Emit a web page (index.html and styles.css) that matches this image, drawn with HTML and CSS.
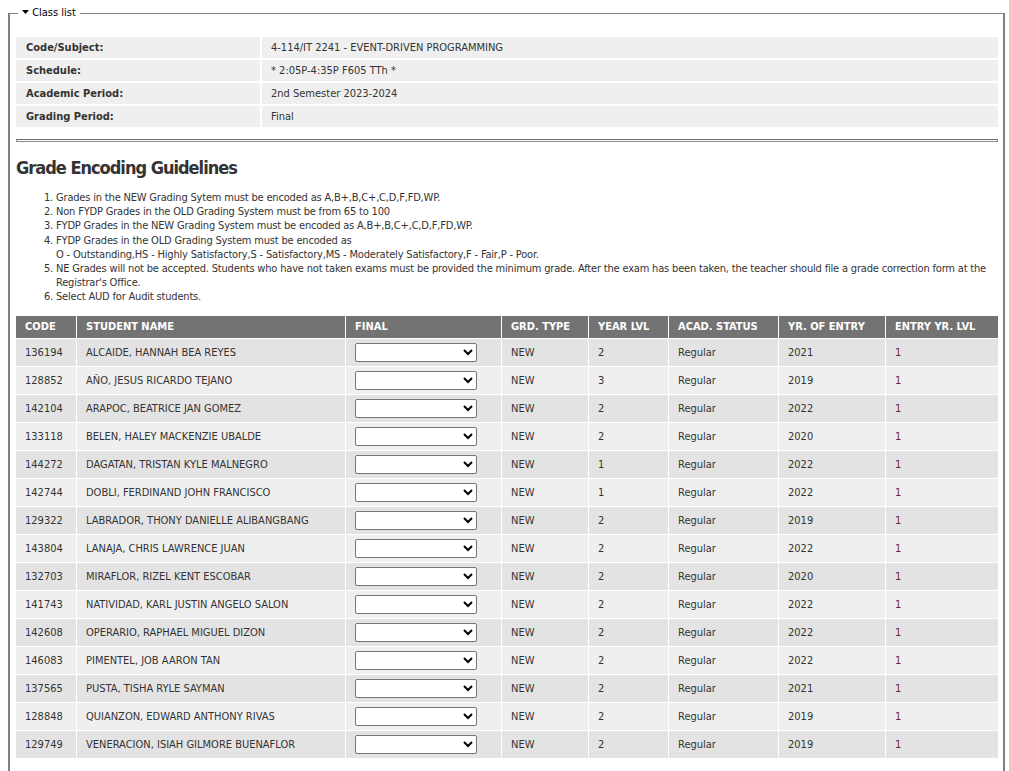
FILE: index.html
```html
<!DOCTYPE html>
<html>
<head>
<meta charset="utf-8">
<link rel="stylesheet" href="styles.css">
</head>
<body>
<fieldset class="box">
  <legend class="box-legend"><svg class="caret" width="7" height="4" viewBox="0 0 7 4"><path d="M0 0H7L3.5 4Z" fill="#000"/></svg> Class list</legend>

  <table class="info">
    <tr><th>Code/Subject:</th><td>4-114/IT 2241 - EVENT-DRIVEN PROGRAMMING</td></tr>
    <tr><th>Schedule:</th><td>* 2:05P-4:35P F605 TTh *</td></tr>
    <tr><th>Academic Period:</th><td>2nd Semester 2023-2024</td></tr>
    <tr><th>Grading Period:</th><td>Final</td></tr>
  </table>

  <div class="divider"></div>

  <h2 class="title">Grade Encoding Guidelines</h2>
  <ol class="rules">
    <li>Grades in the NEW Grading Sytem must be encoded as A,B+,B,C+,C,D,F,FD,WP.</li>
    <li>Non FYDP Grades in the OLD Grading System must be from 65 to 100</li>
    <li>FYDP Grades in the NEW Grading System must be encoded as A,B+,B,C+,C,D,F,FD,WP.</li>
    <li>FYDP Grades in the OLD Grading System must be encoded as<br>O - Outstanding,HS - Highly Satisfactory,S - Satisfactory,MS - Moderately Satisfactory,F - Fair,P - Poor.</li>
    <li>NE Grades will not be accepted. Students who have not taken exams must be provided the minimum grade. After the exam has been taken, the teacher should file a grade correction form at the Registrar's Office.</li>
    <li>Select AUD for Audit students.</li>
  </ol>

  <table class="grades">
    <colgroup>
      <col class="c-code"><col class="c-name"><col class="c-final"><col class="c-type"><col class="c-year"><col class="c-status"><col class="c-entry"><col class="c-lvl">
    </colgroup>
    <thead>
      <tr><th>CODE</th><th>STUDENT NAME</th><th>FINAL</th><th>GRD. TYPE</th><th>YEAR LVL</th><th>ACAD. STATUS</th><th>YR. OF ENTRY</th><th>ENTRY YR. LVL</th></tr>
    </thead>
    <tbody>
      <tr><td>136194</td><td>ALCAIDE, HANNAH BEA REYES</td><td><select class="grade"><option></option></select></td><td>NEW</td><td>2</td><td>Regular</td><td>2021</td><td class="lvl">1</td></tr>
      <tr><td>128852</td><td>AÑO, JESUS RICARDO TEJANO</td><td><select class="grade"><option></option></select></td><td>NEW</td><td>3</td><td>Regular</td><td>2019</td><td class="lvl">1</td></tr>
      <tr><td>142104</td><td>ARAPOC, BEATRICE JAN GOMEZ</td><td><select class="grade"><option></option></select></td><td>NEW</td><td>2</td><td>Regular</td><td>2022</td><td class="lvl">1</td></tr>
      <tr><td>133118</td><td>BELEN, HALEY MACKENZIE UBALDE</td><td><select class="grade"><option></option></select></td><td>NEW</td><td>2</td><td>Regular</td><td>2020</td><td class="lvl">1</td></tr>
      <tr><td>144272</td><td>DAGATAN, TRISTAN KYLE MALNEGRO</td><td><select class="grade"><option></option></select></td><td>NEW</td><td>1</td><td>Regular</td><td>2022</td><td class="lvl">1</td></tr>
      <tr><td>142744</td><td>DOBLI, FERDINAND JOHN FRANCISCO</td><td><select class="grade"><option></option></select></td><td>NEW</td><td>1</td><td>Regular</td><td>2022</td><td class="lvl">1</td></tr>
      <tr><td>129322</td><td>LABRADOR, THONY DANIELLE ALIBANGBANG</td><td><select class="grade"><option></option></select></td><td>NEW</td><td>2</td><td>Regular</td><td>2019</td><td class="lvl">1</td></tr>
      <tr><td>143804</td><td>LANAJA, CHRIS LAWRENCE JUAN</td><td><select class="grade"><option></option></select></td><td>NEW</td><td>2</td><td>Regular</td><td>2022</td><td class="lvl">1</td></tr>
      <tr><td>132703</td><td>MIRAFLOR, RIZEL KENT ESCOBAR</td><td><select class="grade"><option></option></select></td><td>NEW</td><td>2</td><td>Regular</td><td>2020</td><td class="lvl">1</td></tr>
      <tr><td>141743</td><td>NATIVIDAD, KARL JUSTIN ANGELO SALON</td><td><select class="grade"><option></option></select></td><td>NEW</td><td>2</td><td>Regular</td><td>2022</td><td class="lvl">1</td></tr>
      <tr><td>142608</td><td>OPERARIO, RAPHAEL MIGUEL DIZON</td><td><select class="grade"><option></option></select></td><td>NEW</td><td>2</td><td>Regular</td><td>2022</td><td class="lvl">1</td></tr>
      <tr><td>146083</td><td>PIMENTEL, JOB AARON TAN</td><td><select class="grade"><option></option></select></td><td>NEW</td><td>2</td><td>Regular</td><td>2022</td><td class="lvl">1</td></tr>
      <tr><td>137565</td><td>PUSTA, TISHA RYLE SAYMAN</td><td><select class="grade"><option></option></select></td><td>NEW</td><td>2</td><td>Regular</td><td>2021</td><td class="lvl">1</td></tr>
      <tr><td>128848</td><td>QUIANZON, EDWARD ANTHONY RIVAS</td><td><select class="grade"><option></option></select></td><td>NEW</td><td>2</td><td>Regular</td><td>2019</td><td class="lvl">1</td></tr>
      <tr><td>129749</td><td>VENERACION, ISIAH GILMORE BUENAFLOR</td><td><select class="grade"><option></option></select></td><td>NEW</td><td>2</td><td>Regular</td><td>2019</td><td class="lvl">1</td></tr>
    </tbody>
  </table>
</fieldset>
</body>
</html>
```

FILE: styles.css
```css
html, body {
  margin: 0;
  padding: 0;
  background: #fff;
}

body {
  font-family: "DejaVu Sans Condensed", "DejaVu Sans", "Liberation Sans", sans-serif;
  font-size: 11px;
  color: #333;
}

.box {
  margin: 6px 4px 0 8px;
  padding: 15px 3px 40px 4px;
  border: 2px solid #808080;
  border-top-width: 1px;
  min-width: 0;
}

.box-legend {
  margin-left: 4px;
  padding: 0 4px;
  line-height: 14px;
  color: #000;
  font-size: 11px;
}

.caret {
  vertical-align: 2px;
  margin-right: 0;
}

.info {
  width: 100%;
  border-collapse: separate;
  border-spacing: 2px;
}

.info th,
.info td {
  background: #efefef;
  height: 21px;
  padding: 0 10px;
  text-align: left;
  vertical-align: middle;
}

.info th {
  width: 224px;
  font-weight: bold;
}

.info td {
  padding-left: 9px;
}

.divider {
  margin: 10px 2px 0 2px;
  height: 1px;
  border: 1px solid #8c8c8c;
  border-top-color: #6c6c6c;
}

.title {
  margin: 15px 0 12px 2px;
  font-size: 18px;
  line-height: 22px;
  font-weight: bold;
  letter-spacing: -1px;
  color: #333;
}

.rules {
  margin: 0;
  padding-left: 42px;
  line-height: 14.2px;
  letter-spacing: -0.18px;
  color: #333;
}

.grades {
  margin: 10px 1px 0 1px;
  width: calc(100% - 2px);
  table-layout: fixed;
  border-collapse: separate;
  border-spacing: 1px;
}

.c-code { width: 60px; }
.c-name { width: 268px; }
.c-final { width: 155px; }
.c-type { width: 86px; }
.c-year { width: 79px; }
.c-status { width: 109px; }
.c-entry { width: 106px; }
.c-lvl { width: 112px; }

.grades th {
  background: #737373;
  color: #fff;
  font-weight: bold;
  text-align: left;
  height: 22px;
  padding: 0 9px;
  white-space: nowrap;
}

.grades td {
  height: 27px;
  padding: 0 9px;
  vertical-align: middle;
  white-space: nowrap;
}

.grades tbody tr:nth-child(odd) td {
  background: #e3e3e3;
}

.grades tbody tr:nth-child(even) td {
  background: #efefef;
}

.grades td.lvl {
  color: #6a1f35;
}

.grade {
  display: block;
  width: 122px;
  height: 19px;
  margin: 0;
  padding: 0 2px;
  font-family: inherit;
  font-size: 11px;
  border: 1px solid #767676;
  border-radius: 2px;
  background: #fff;
  color: #000;
}
```
